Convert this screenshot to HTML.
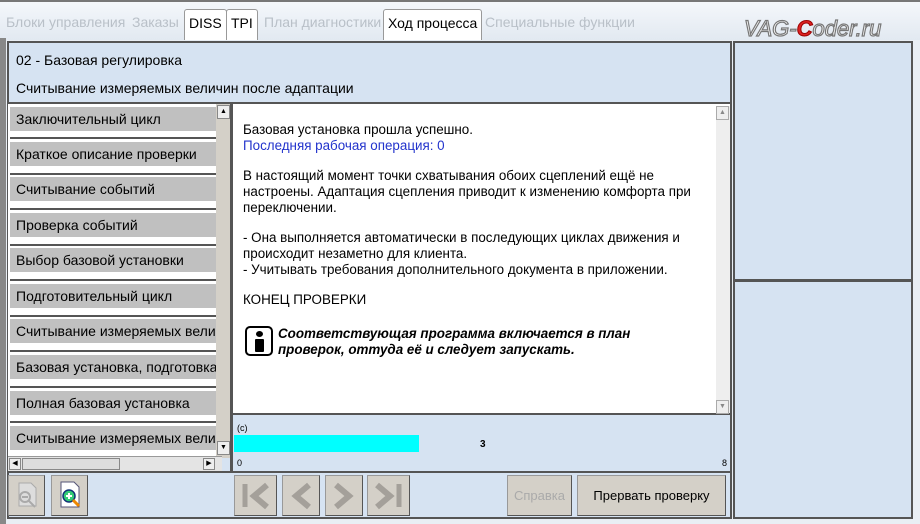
<!DOCTYPE html><html><head><meta charset="utf-8"><style>
*{box-sizing:border-box;margin:0;padding:0}
body{width:920px;height:524px;overflow:hidden;background:#e9eef4;font-family:"Liberation Sans",sans-serif;font-size:13px;position:relative;color:#000}
.a{position:absolute}
.tabs{left:0;top:0;width:920px;height:40px;background:linear-gradient(#f4f7fb,#e2e9f1);border-top:2px solid #777}
.tab{position:absolute;top:7px;height:31px;line-height:26px;font-size:14px;color:#b9c0c8;padding:0 4px}
.tab.on{background:#fff;border:1px solid #999;border-bottom:none;color:#000;border-radius:3px 3px 0 0}
.panel{background:#d6e3f2;border:2px solid #555}
.li{position:absolute;left:2px;width:206px;height:24px;background:#c0c0c0;font-size:14px;line-height:24px;padding-left:6px;white-space:nowrap;overflow:hidden}
.sep{position:absolute;left:2px;width:206px;height:2px;background:#555}
.btn{position:absolute;background:#d4d0c8;border:1px solid #999;border-right-color:#555;border-bottom-color:#555}
</style></head><body>
<div class="a tabs">
<div class="tab" style="left:2px">Блоки управления</div>
<div class="tab" style="left:128px">Заказы</div>
<div class="tab on" style="left:184px">DISS</div>
<div class="tab on" style="left:226px">TPI</div>
<div class="tab" style="left:260px">План диагностики</div>
<div class="tab on" style="left:383px">Ход процесса</div>
<div class="tab" style="left:481px">Специальные функции</div>
<div class="a" style="left:744px;top:14px;font-size:22px;font-style:italic;color:#fff;-webkit-text-stroke:1.2px #777">VAG-<span style="color:#d22;-webkit-text-stroke:1px #900;font-weight:bold">C</span>oder.ru</div>
</div>
<div class="a" style="left:0;top:38px;width:6px;height:486px;background:#888"></div>
<div class="a panel" style="left:7px;top:41px;width:725px;height:478px"></div>
<div class="a" style="left:16px;top:52px;font-size:14px">02 - Базовая регулировка</div>
<div class="a" style="left:16px;top:80px;font-size:14px">Считывание измеряемых величин после адаптации</div>
<div class="a panel" style="left:733px;top:41px;width:180px;height:240px"></div>
<div class="a panel" style="left:733px;top:281px;width:180px;height:238px;border-top:1px solid #555"></div>
<div class="a" style="left:7px;top:102px;width:725px;height:2px;background:#555"></div>
<div class="a" style="left:8px;top:104px;width:224px;height:354px;background:#fff;overflow:hidden">
<div class="li" style="top:3px">Заключительный цикл</div>
<div class="sep" style="top:33px"></div><div class="li" style="top:38px">Краткое описание проверки</div>
<div class="sep" style="top:69px"></div><div class="li" style="top:73px">Считывание событий</div>
<div class="sep" style="top:104px"></div><div class="li" style="top:109px">Проверка событий</div>
<div class="sep" style="top:140px"></div><div class="li" style="top:144px">Выбор базовой установки</div>
<div class="sep" style="top:175px"></div><div class="li" style="top:180px">Подготовительный цикл</div>
<div class="sep" style="top:211px"></div><div class="li" style="top:215px">Считывание измеряемых величин</div>
<div class="sep" style="top:246px"></div><div class="li" style="top:251px">Базовая установка, подготовка</div>
<div class="sep" style="top:282px"></div><div class="li" style="top:287px">Полная базовая установка</div>
<div class="sep" style="top:317px"></div><div class="li" style="top:322px">Считывание измеряемых величин</div>
<div class="a" style="left:208px;top:0;width:16px;height:354px;background:#d4d0c8"></div>
<div class="a" style="left:209px;top:1px;width:13px;height:14px;background:#eee;border:1px solid #888;font-size:7px;text-align:center;line-height:12px">▲</div>
<div class="a" style="left:209px;top:337px;width:13px;height:14px;background:#eee;border:1px solid #888;font-size:7px;text-align:center;line-height:12px">▼</div>
</div>
<div class="a" style="left:8px;top:456px;width:214px;height:16px;background:#e4e4e4;border-top:1px solid #999"></div>
<div class="a" style="left:9px;top:458px;width:12px;height:12px;background:#eee;border:1px solid #888;font-size:7px;text-align:center;line-height:10px">◀</div>
<div class="a" style="left:22px;top:458px;width:98px;height:12px;background:#ddd;border:1px solid #888"></div>
<div class="a" style="left:203px;top:458px;width:12px;height:12px;background:#eee;border:1px solid #888;font-size:7px;text-align:center;line-height:10px">▶</div>
<div class="a" style="left:230px;top:104px;width:3px;height:368px;background:#555"></div>
<div class="a" style="left:7px;top:471px;width:725px;height:2px;background:#555"></div>
<div class="a" style="left:233px;top:104px;width:497px;height:311px;background:#fff;border-bottom:2px solid #555"></div>
<div class="a" style="left:716px;top:106px;width:14px;height:307px;background:#eee"></div>
<div class="a" style="left:716px;top:106px;width:13px;height:14px;border:1px solid #aaa;font-size:7px;text-align:center;color:#888;line-height:12px">▲</div>
<div class="a" style="left:716px;top:400px;width:13px;height:14px;border:1px solid #aaa;font-size:7px;text-align:center;color:#888;line-height:12px">▼</div>
<div class="a" style="left:243px;top:122px;font-size:13.4px;line-height:16px;width:470px">Базовая установка прошла успешно.<br><span style="color:#2233cc">Последняя рабочая операция: 0</span><br><div style="height:14px"></div>В настоящий момент точки схватывания обоих сцеплений ещё не настроены. Адаптация сцепления приводит к изменению комфорта при переключении.<div style="height:14px"></div>- Она выполняется автоматически в последующих циклах движения и происходит незаметно для клиента.<br>- Учитывать требования дополнительного документа в приложении.<div style="height:14px"></div>КОНЕЦ ПРОВЕРКИ</div>
<div class="a" style="left:245px;top:326px;width:28px;height:30px;border:2px solid #000;border-radius:5px"><div class="a" style="left:9px;top:3px;width:7px;height:6px;background:#000;border-radius:50%"></div><div class="a" style="left:8px;top:11px;width:9px;height:13px;background:#000;border-radius:1px"></div></div>
<div class="a" style="left:278px;top:326px;font-size:13.4px;font-weight:bold;font-style:italic;line-height:16px">Соответствующая программа включается в план<br>проверок, оттуда её и следует запускать.</div>
<div class="a" style="left:237px;top:423px;font-size:9px">(c)</div>
<div class="a" style="left:234px;top:435px;width:185px;height:17px;background:#00ffff"></div>
<div class="a" style="left:480px;top:439px;font-size:10px;font-weight:bold">3</div>
<div class="a" style="left:237px;top:458px;font-size:9px">0</div>
<div class="a" style="left:722px;top:458px;font-size:9px">8</div>
<div class="btn" style="left:8px;top:475px;width:37px;height:41px"><svg width="35" height="39"><path d="M10 7h12l5 5v18H10z" fill="#ddd" stroke="#aaa"/><circle cx="16" cy="21" r="5" fill="none" stroke="#aaa" stroke-width="2"/><path d="M13 21h6M20 25l6 6" stroke="#aaa" stroke-width="2"/></svg></div>
<div class="btn" style="left:51px;top:475px;width:37px;height:41px"><svg width="35" height="39"><path d="M9 6h13l5 5v20H9z" fill="#fff" stroke="#557"/><circle cx="17" cy="20" r="6" fill="#3c7" stroke="#137" stroke-width="1.5"/><path d="M14 20h6M17 17v6" stroke="#fff" stroke-width="2"/><path d="M21 24l6 6" stroke="#e80" stroke-width="3"/></svg></div>
<div class="btn" style="left:234px;top:475px;width:43px;height:41px"><svg width="41" height="39"><path d="M10 8v23" stroke="#a4a09a" stroke-width="5"/><path d="M32 9l-13 11 13 11" fill="none" stroke="#a4a09a" stroke-width="6"/></svg></div>
<div class="btn" style="left:282px;top:475px;width:38px;height:41px"><svg width="36" height="39"><path d="M26 9l-13 11 13 11" fill="none" stroke="#a4a09a" stroke-width="6"/></svg></div>
<div class="btn" style="left:325px;top:475px;width:38px;height:41px"><svg width="36" height="39"><path d="M10 9l13 11-13 11" fill="none" stroke="#a4a09a" stroke-width="6"/></svg></div>
<div class="btn" style="left:367px;top:475px;width:43px;height:41px"><svg width="41" height="39"><path d="M31 8v23" stroke="#a4a09a" stroke-width="5"/><path d="M9 9l13 11-13 11" fill="none" stroke="#a4a09a" stroke-width="6"/></svg></div>
<div class="btn" style="left:507px;top:475px;width:65px;height:41px;text-align:center;line-height:39px;color:#aaa">Справка</div>
<div class="btn" style="left:577px;top:475px;width:149px;height:41px;text-align:center;line-height:39px">Прервать проверку</div>
</body></html>
